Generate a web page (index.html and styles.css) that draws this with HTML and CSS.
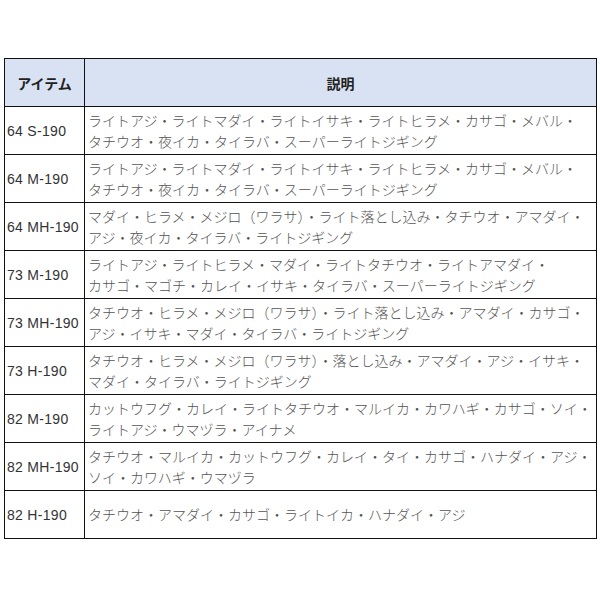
FILE: index.html
```html
<!DOCTYPE html>
<html lang="ja">
<head>
<meta charset="utf-8">
<link rel="stylesheet" href="styles.css">
</head>
<body>
<div class="wrap">
<table class="spec">
<thead>
<tr><th class="c-item">アイテム</th><th class="c-desc">説明</th></tr>
</thead>
<tbody>
<tr><td class="item">64 S-190</td><td class="desc">ライトアジ・ライトマダイ・ライトイサキ・ライトヒラメ・カサゴ・メバル・<br>タチウオ・夜イカ・タイラバ・スーパーライトジギング</td></tr>
<tr><td class="item">64 M-190</td><td class="desc">ライトアジ・ライトマダイ・ライトイサキ・ライトヒラメ・カサゴ・メバル・<br>タチウオ・夜イカ・タイラバ・スーパーライトジギング</td></tr>
<tr><td class="item">64 MH-190</td><td class="desc">マダイ・ヒラメ・メジロ（ワラサ）・ライト落とし込み・タチウオ・アマダイ・<br>アジ・夜イカ・タイラバ・ライトジギング</td></tr>
<tr><td class="item">73 M-190</td><td class="desc">ライトアジ・ライトヒラメ・マダイ・ライトタチウオ・ライトアマダイ・<br>カサゴ・マゴチ・カレイ・イサキ・タイラバ・スーパーライトジギング</td></tr>
<tr><td class="item">73 MH-190</td><td class="desc">タチウオ・ヒラメ・メジロ（ワラサ）・ライト落とし込み・アマダイ・カサゴ・<br>アジ・イサキ・マダイ・タイラバ・ライトジギング</td></tr>
<tr><td class="item">73 H-190</td><td class="desc">タチウオ・ヒラメ・メジロ（ワラサ）・落とし込み・アマダイ・アジ・イサキ・<br>マダイ・タイラバ・ライトジギング</td></tr>
<tr><td class="item">82 M-190</td><td class="desc">カットウフグ・カレイ・ライトタチウオ・マルイカ・カワハギ・カサゴ・ソイ・<br>ライトアジ・ウマヅラ・アイナメ</td></tr>
<tr><td class="item">82 MH-190</td><td class="desc">タチウオ・マルイカ・カットウフグ・カレイ・タイ・カサゴ・ハナダイ・アジ・<br>ソイ・カワハギ・ウマヅラ</td></tr>
<tr><td class="item">82 H-190</td><td class="desc">タチウオ・アマダイ・カサゴ・ライトイカ・ハナダイ・アジ</td></tr>
</tbody>
</table>
</div>
</body>
</html>
```

FILE: styles.css
```css
html, body {
  margin: 0;
  padding: 0;
  background: #ffffff;
}
.wrap {
  padding: 58px 0 0 4px;
}
.spec {
  border-collapse: collapse;
  table-layout: fixed;
  width: 593px;
  font-family: "Liberation Sans", "Noto Sans CJK JP", sans-serif;
  font-size: 14px;
}
.spec th, .spec td {
  border: 1px solid #111;
  height: 48px;
  box-sizing: border-box;
  vertical-align: middle;
  padding: 0;
}
.spec th {
  background: #d9e2f3;
  font-family: "Noto Sans CJK JP", sans-serif;
  font-weight: bold;
  color: #222;
  text-align: center;
}
.c-item {
  width: 80px;
}
.item {
  color: #333;
  padding-left: 2px !important;
  white-space: nowrap;
  letter-spacing: 0.3px;
}
.desc {
  font-family: "Noto Sans CJK JP", sans-serif;
  font-weight: 300;
  color: #555;
  line-height: 21px;
  padding-left: 3px !important;
  white-space: nowrap;
}
```
